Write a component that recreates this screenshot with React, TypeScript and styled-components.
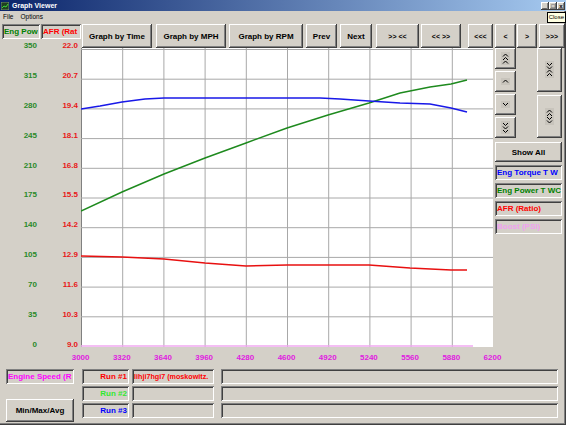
import { Fragment } from 'react';
import styled, { createGlobalStyle, css } from 'styled-components';

const GlobalStyle = createGlobalStyle`
  html, body {
    margin: 0;
    padding: 0;
    background: #d4d0c8;
  }
  body {
    font-family: "Liberation Sans", Arial, sans-serif;
  }
`;

const raised = css`
  background: #d4d0c8;
  box-shadow: inset -1px -1px #404040, inset 1px 1px #ffffff, inset -2px -2px #808080;
`;

const sunken = css`
  background: #d4d0c8;
  box-shadow: inset 1px 1px #808080, inset -1px -1px #ffffff, inset 2px 2px #404040;
`;

const Window = styled.div`
  position: relative;
  width: 566px;
  height: 425px;
  overflow: hidden;
  display: flex;
  flex-direction: column;
  background: #d4d0c8;
  box-shadow: inset -1px -1px #404040, inset -2px -2px #808080;
`;

const TitleBar = styled.div`
  height: 11px;
  display: flex;
  align-items: center;
  padding: 0 1px;
  background: linear-gradient(to right, #0a246a, #a6caf0);
`;

const TitleText = styled.span`
  flex: 1;
  margin-left: 3px;
  color: #fff;
  font-size: 7px;
  font-weight: bold;
  line-height: 11px;
`;

const CaptionButtons = styled.div`
  display: flex;
`;

const CaptionButton = styled.div`
  ${raised};
  width: 8px;
  height: 8px;
  display: flex;
  align-items: center;
  justify-content: center;
  font-size: 6px;
  font-weight: bold;
  line-height: 8px;
  color: #000;
`;

const MenuBar = styled.div`
  height: 11px;
  display: flex;
  align-items: center;
  gap: 7px;
  padding-left: 3px;
  font-size: 6.5px;
  color: #000;
`;

const Tooltip = styled.div`
  position: absolute;
  top: 12px;
  right: 0;
  height: 9px;
  padding: 0 1px;
  background: #ffffe1;
  border: 1px solid #000;
  font-size: 6px;
  line-height: 9px;
  color: #000;
`;

const Upper = styled.div`
  display: flex;
  height: 328px;
`;

const LeftCol = styled.div`
  width: 81px;
  padding-top: 2px;
  display: flex;
  flex-direction: column;
  gap: 2px;
`;

const HeaderRow = styled.div`
  display: flex;
  gap: 1px;
  padding-left: 2px;
`;

const SunkenLabel = styled.div<{ $color: string; $w: number; $align?: string; $size?: number }>`
  ${sunken};
  width: ${(p) => p.$w}px;
  height: 15px;
  box-sizing: border-box;
  padding: 0 2px;
  overflow: hidden;
  white-space: nowrap;
  color: ${(p) => p.$color};
  text-align: ${(p) => p.$align ?? 'left'};
  font-size: ${(p) => p.$size ?? 8}px;
  font-weight: bold;
  line-height: 15px;
`;

const AxisRow = styled.div`
  display: flex;
  height: 310px;
`;

const AxisColumn = styled.div<{ $color: string; $w: number }>`
  width: ${(p) => p.$w}px;
  display: flex;
  flex-direction: column;
  justify-content: space-between;
  align-items: flex-end;
  color: ${(p) => p.$color};
  font-size: 8px;
  font-weight: bold;
  line-height: 10px;
`;

const MainCol = styled.div`
  flex: 1;
  padding-top: 2px;
  display: flex;
  flex-direction: column;
`;

const Toolbar = styled.div`
  display: flex;
  height: 24px;
  margin-left: 1px;
`;

const ToolButton = styled.div<{ $w: number; $ml?: number; $small?: boolean }>`
  ${raised};
  width: ${(p) => p.$w}px;
  margin-left: ${(p) => p.$ml ?? 0}px;
  height: 24px;
  display: flex;
  align-items: center;
  justify-content: center;
  font-size: ${(p) => (p.$small ? 7 : 8)}px;
  font-weight: bold;
  color: #000;
  white-space: nowrap;
`;

const ChartRow = styled.div`
  display: flex;
  height: 299px;
`;

const ChartBox = styled.div`
  width: 412px;
  height: 299px;
  background: #fff;
`;

const RightPanel = styled.div`
  flex: 1;
  padding-left: 2px;
  display: flex;
  flex-direction: column;
`;

const ZoomButtons = styled.div`
  display: flex;
  height: 90px;
`;

const ButtonStack = styled.div<{ $w: number; $ml?: number }>`
  width: ${(p) => p.$w}px;
  margin-left: ${(p) => p.$ml ?? 0}px;
  display: flex;
  flex-direction: column;
  gap: ${(p) => (p.$ml ? 3 : 2)}px;
`;

const IconButton = styled.div`
  ${raised};
  flex: 1;
  display: flex;
  align-items: center;
  justify-content: center;
`;

const IconInset = styled.div`
  padding: 1px;
  background: #c8c4bc;
  display: flex;
`;

const ShowAll = styled.div`
  ${raised};
  width: 67px;
  height: 20px;
  margin-top: 4px;
  display: flex;
  align-items: center;
  justify-content: center;
  font-size: 8px;
  font-weight: bold;
  color: #000;
`;

const Legend = styled.div`
  margin-top: 3px;
  display: flex;
  flex-direction: column;
  gap: 3px;
`;

const XLabels = styled.div`
  display: grid;
  grid-template-columns: repeat(11, 41.2px);
  margin-left: 60px;
  height: 14px;
  align-items: center;
  color: #e020e0;
  font-size: 8px;
  font-weight: bold;
  text-align: center;
`;

const Bottom = styled.div`
  display: flex;
  padding-top: 5px;
`;

const LeftStack = styled.div`
  width: 68px;
  height: 53px;
  margin-left: 6px;
  display: flex;
  flex-direction: column;
  justify-content: space-between;
`;

const BigButton = styled.div`
  ${raised};
  height: 23px;
  display: flex;
  align-items: center;
  justify-content: center;
  font-size: 8px;
  font-weight: bold;
  color: #000;
`;

const RunGrid = styled.div`
  margin-left: 8px;
  display: grid;
  grid-template-columns: 47px 82px 341px;
  grid-auto-rows: 15px;
  column-gap: 3px;
  row-gap: 2px;
`;

const WideBox = styled.div`
  ${sunken};
  margin-left: 4px;
`;

const W = 412;
const H = 299;
const colW = W / 10;
const rowH = 29.7;

const toPath = (pts: [number, number][]) =>
  pts.map(([x, y], i) => `${i ? 'L' : 'M'}${x - 81},${y - 48}`).join(' ');

const blue: [number, number][] = [
  [81, 109], [100, 106], [122, 102], [145, 99], [164, 98], [205, 98], [246, 98],
  [287, 98], [320, 98], [340, 99], [369, 101], [400, 103], [430, 104], [451, 108], [467, 112],
];
const green: [number, number][] = [
  [81, 211], [122, 192], [164, 174], [205, 158], [246, 143], [287, 128],
  [328, 115], [369, 103], [400, 93], [430, 87], [451, 84], [467, 80],
];
const red: [number, number][] = [
  [81, 256], [122, 257], [164, 259], [205, 263], [246, 266], [287, 265],
  [328, 265], [369, 265], [410, 268], [451, 270], [467, 270],
];

function Chart() {
  return (
    <ChartBox>
      <svg width={W} height={H}>
        {Array.from({ length: 11 }, (_, i) => (
          <line key={`v${i}`} x1={i * colW + 0.5} x2={i * colW + 0.5} y1={0} y2={H} stroke={i === 0 ? '#808080' : '#a8a8a8'} />
        ))}
        {Array.from({ length: 10 }, (_, j) => (
          <line key={`h${j}`} x1={0} x2={W} y1={1.5 + j * rowH} y2={1.5 + j * rowH} stroke="#a8a8a8" />
        ))}
        <line x1={0} x2={W - 20} y1={298} y2={298} stroke="#f0a8f0" strokeWidth={1.5} />
        <path d={toPath(green)} fill="none" stroke="#1e8a1e" strokeWidth={1.4} />
        <path d={toPath(blue)} fill="none" stroke="#1818e8" strokeWidth={1.6} />
        <path d={toPath(red)} fill="none" stroke="#e81010" strokeWidth={1.4} />
      </svg>
    </ChartBox>
  );
}

function Chevrons({ dirs }: { dirs: ('u' | 'd')[] }) {
  const h = dirs.length * 3.5 + 1;
  return (
    <svg width={7} height={h}>
      {dirs.map((d, i) => {
        const y = 1 + i * 3.5;
        const pts = d === 'u' ? `1,${y + 2.5} 3.5,${y} 6,${y + 2.5}` : `1,${y} 3.5,${y + 2.5} 6,${y}`;
        return <polyline key={i} points={pts} fill="none" stroke="#000" strokeWidth={1} />;
      })}
    </svg>
  );
}

function TitleIcon() {
  return (
    <svg width={8} height={8}>
      <rect x={0} y={0} width={8} height={8} fill="#204020" stroke="#a0c0a0" strokeWidth={0.6} />
      <polyline points="1,6 3,4 5,5 7,2" fill="none" stroke="#40ff40" strokeWidth={0.8} />
    </svg>
  );
}

const greenTicks = ['350', '315', '280', '245', '210', '175', '140', '105', '70', '35', '0'];
const redTicks = ['22.0', '20.7', '19.4', '18.1', '16.8', '15.5', '14.2', '12.9', '11.6', '10.3', '9.0'];
const xTicks = ['3000', '3320', '3640', '3960', '4280', '4600', '4920', '5240', '5560', '5880', '6200'];

const legend = [
  { label: 'Eng Torque T W', color: '#0000ff' },
  { label: 'Eng Power T WC', color: '#008000' },
  { label: 'AFR (Ratio)', color: '#ff0000' },
  { label: 'Boost (PSI)', color: '#f0a0f0' },
];

const runs = [
  { label: 'Run #1', color: '#ff0000', name: 'lihji7hgi7 (moskowitz.' },
  { label: 'Run #2', color: '#30e830', name: '' },
  { label: 'Run #3', color: '#0000ff', name: '' },
];

export default function App() {
  return (
    <>
      <GlobalStyle />
      <Window>
        <TitleBar>
          <TitleIcon />
          <TitleText>Graph Viewer</TitleText>
          <CaptionButtons>
            <CaptionButton>_</CaptionButton>
            <CaptionButton>□</CaptionButton>
            <CaptionButton>x</CaptionButton>
          </CaptionButtons>
        </TitleBar>
        <MenuBar>
          <span>File</span>
          <span>Options</span>
        </MenuBar>
        <Tooltip>Close</Tooltip>

        <Upper>
          <LeftCol>
            <HeaderRow>
              <SunkenLabel $color="#008000" $w={38}>Eng Pow</SunkenLabel>
              <SunkenLabel $color="#ff0000" $w={40}>AFR (Rat</SunkenLabel>
            </HeaderRow>
            <AxisRow>
              <AxisColumn $color="#2a8a2a" $w={37}>
                {greenTicks.map((t) => <span key={t}>{t}</span>)}
              </AxisColumn>
              <AxisColumn $color="#e81818" $w={41}>
                {redTicks.map((t) => <span key={t}>{t}</span>)}
              </AxisColumn>
            </AxisRow>
          </LeftCol>

          <MainCol>
            <Toolbar>
              <ToolButton $w={70}>Graph by Time</ToolButton>
              <ToolButton $w={70} $ml={4}>Graph by MPH</ToolButton>
              <ToolButton $w={74} $ml={3}>Graph by RPM</ToolButton>
              <ToolButton $w={31} $ml={3}>Prev</ToolButton>
              <ToolButton $w={32} $ml={3}>Next</ToolButton>
              <ToolButton $w={43} $ml={4} $small>&gt;&gt; &lt;&lt;</ToolButton>
              <ToolButton $w={40} $ml={2} $small>&lt;&lt; &gt;&gt;</ToolButton>
              <ToolButton $w={25} $ml={7} $small>&lt;&lt;&lt;</ToolButton>
              <ToolButton $w={21} $ml={2} $small>&lt;</ToolButton>
              <ToolButton $w={20} $ml={1} $small>&gt;</ToolButton>
              <ToolButton $w={26} $ml={2} $small>&gt;&gt;&gt;</ToolButton>
            </Toolbar>
            <ChartRow>
              <Chart />
              <RightPanel>
                <ZoomButtons>
                  <ButtonStack $w={21}>
                    <IconButton><IconInset><Chevrons dirs={['u', 'u', 'u']} /></IconInset></IconButton>
                    <IconButton><IconInset><Chevrons dirs={['u']} /></IconInset></IconButton>
                    <IconButton><IconInset><Chevrons dirs={['d']} /></IconInset></IconButton>
                    <IconButton><IconInset><Chevrons dirs={['d', 'd', 'd']} /></IconInset></IconButton>
                  </ButtonStack>
                  <ButtonStack $w={25} $ml={21}>
                    <IconButton><IconInset><Chevrons dirs={['d', 'd', 'u', 'u']} /></IconInset></IconButton>
                    <IconButton><IconInset><Chevrons dirs={['u', 'u', 'd', 'd']} /></IconInset></IconButton>
                  </ButtonStack>
                </ZoomButtons>
                <ShowAll>Show All</ShowAll>
                <Legend>
                  {legend.map((l) => (
                    <SunkenLabel key={l.label} $color={l.color} $w={67}>{l.label}</SunkenLabel>
                  ))}
                </Legend>
              </RightPanel>
            </ChartRow>
          </MainCol>
        </Upper>

        <XLabels>
          {xTicks.map((t) => <span key={t}>{t}</span>)}
        </XLabels>

        <Bottom>
          <LeftStack>
            <SunkenLabel $color="#ff00ff" $w={68}>Engine Speed (R</SunkenLabel>
            <BigButton>Min/Max/Avg</BigButton>
          </LeftStack>
          <RunGrid>
            {runs.map((r) => (
              <Fragment key={r.label}>
                <SunkenLabel $color={r.color} $w={47} $align="right">{r.label}</SunkenLabel>
                <SunkenLabel $color="#ff0000" $w={82} $size={7.2}>{r.name}</SunkenLabel>
                <WideBox />
              </Fragment>
            ))}
          </RunGrid>
        </Bottom>
      </Window>
    </>
  );
}
